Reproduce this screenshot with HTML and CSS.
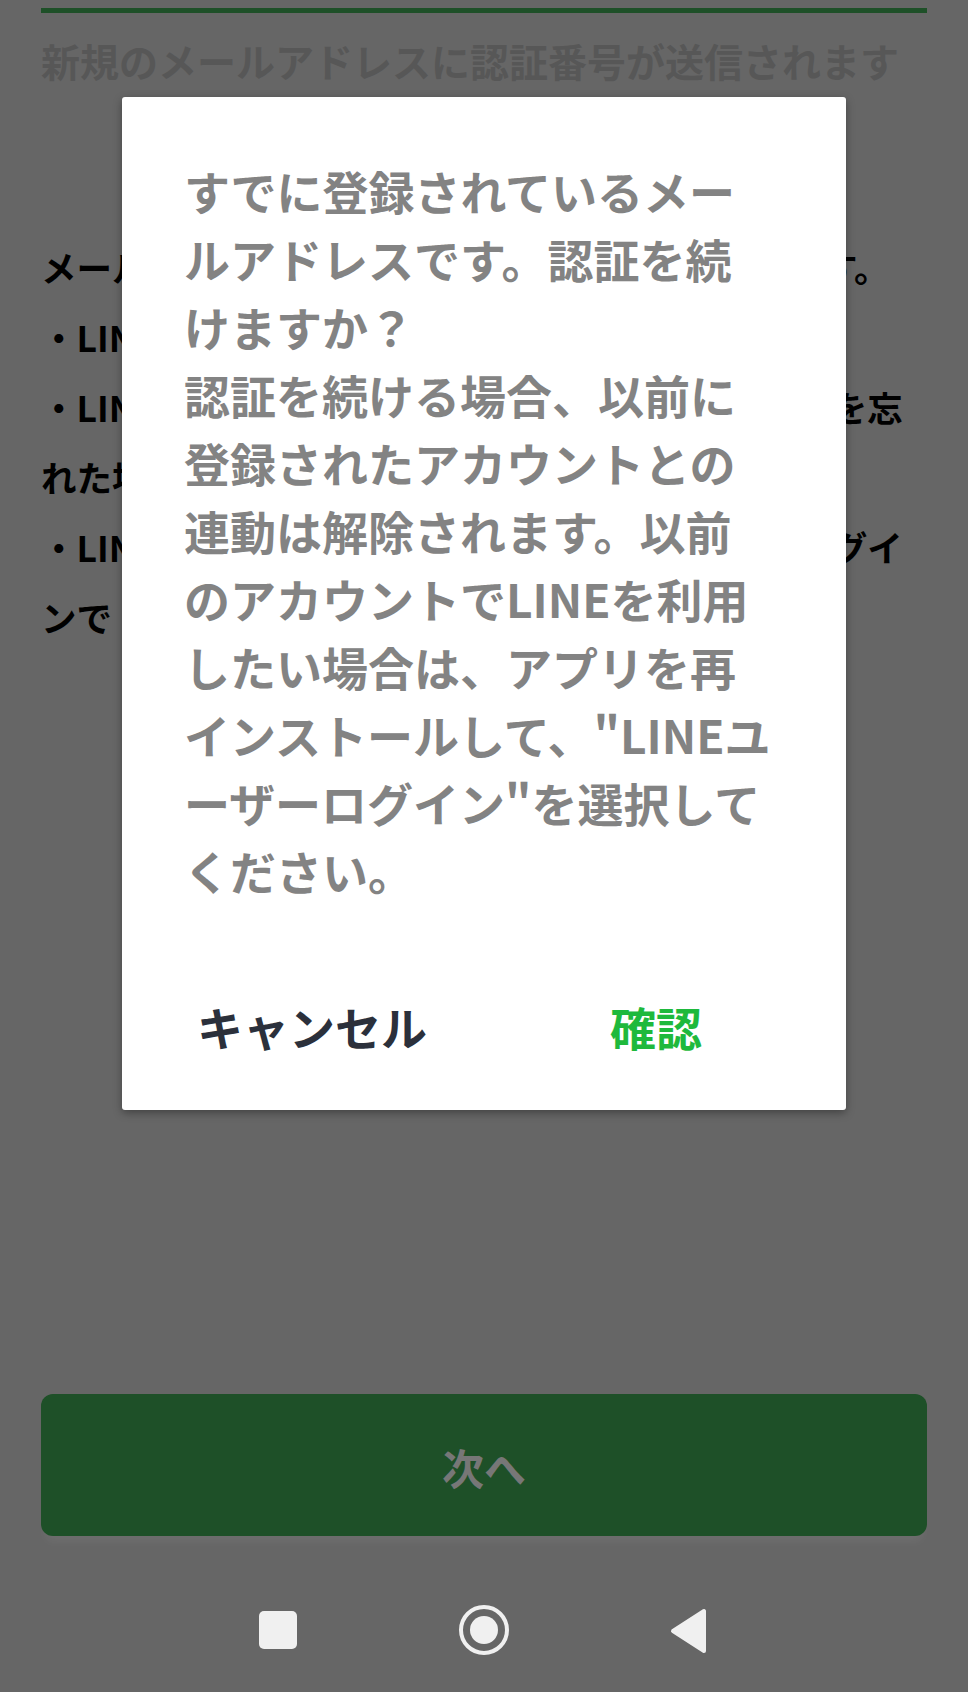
FILE: index.html
```html
<!DOCTYPE html>
<html lang="ja">
<head>
<meta charset="utf-8">
<title>メールアドレス登録</title>
<link rel="stylesheet" href="styles.css">
</head>
<body>
<div class="screen">
  <main class="content">
    <div class="progress"></div>
    <p class="hint">新規のメールアドレスに認証番号が送信されます</p>
    <div class="info">
      <p>メールアドレスを登録すると以下の３つができます。</p>
      <p>・LINEアカウントの引き継ぎ</p>
      <p>・LINEアカウントのパスワードやメールアドレスを忘れた場合の再設定</p>
      <p>・LINEアカウントでパソコンやタブレットからログインでトークができます</p>
    </div>
  </main>

  <footer class="footer">
    <button class="next" type="button">次へ</button>
    <nav class="navbar">
      <span class="nav-icon">
        <svg width="52" height="52" viewBox="0 0 52 52"><rect x="7" y="7" width="38" height="38" rx="5" fill="#f0f0f0"/></svg>
      </span>
      <span class="nav-icon">
        <svg width="52" height="52" viewBox="0 0 52 52"><circle cx="26" cy="26" r="23" fill="none" stroke="#f0f0f0" stroke-width="4"/><circle cx="26" cy="26" r="14" fill="#f0f0f0"/></svg>
      </span>
      <span class="nav-icon">
        <svg width="52" height="52" viewBox="0 0 52 52"><path d="M9 27 L40 7 L40 47 Z" fill="#f0f0f0" stroke="#f0f0f0" stroke-width="4" stroke-linejoin="round"/></svg>
      </span>
    </nav>
  </footer>

  <div class="dialog" role="dialog">
    <p class="message">すでに登録されているメー<br>ルアドレスです。認証を続<br>けますか？<br>認証を続ける場合、以前に<br>登録されたアカウントとの<br>連動は解除されます。以前<br>のアカウントでLINEを利用<br>したい場合は、アプリを再<br>インストールして、&quot;LINEユ<br>ーザーログイン&quot;を選択して<br>ください。</p>
    <div class="actions">
      <button class="action cancel" type="button">キャンセル</button>
      <button class="action confirm" type="button">確認</button>
    </div>
  </div>
</div>
</body>
</html>
```

FILE: styles.css
```css
html, body {
  margin: 0;
  padding: 0;
}

body {
  background: #666666;
  font-family: "Noto Sans CJK JP", "Noto Sans", sans-serif;
}

.screen {
  position: relative;
  width: 968px;
  height: 1692px;
  display: flex;
  flex-direction: column;
  overflow: hidden;
}

.content {
  padding: 8px 41px 0;
}

.progress {
  height: 5px;
  background: #1e5028;
}

.hint {
  margin: 17px 0 0;
  font-size: 39px;
  line-height: 60px;
  font-weight: 700;
  color: #575757;
  white-space: nowrap;
}

.info {
  margin-top: 142px;
  font-size: 35.5px;
  line-height: 70px;
  font-weight: 700;
  color: #000;
  line-break: loose;
}

.info p {
  margin: 0;
}

.footer {
  margin-top: auto;
  padding: 0 41px;
}

.next {
  display: block;
  width: 100%;
  height: 142px;
  padding: 4px 0 0;
  border: 0;
  border-radius: 12px;
  background: #1e5028;
  color: #777777;
  font-family: "Noto Sans CJK JP", "Noto Sans", sans-serif;
  font-size: 42px;
  font-weight: 700;
  line-height: 1;
  box-shadow: 0 10px 8px -4px rgba(255, 255, 255, 0.05);
}

.navbar {
  height: 124px;
  margin-top: 32px;
  display: flex;
  justify-content: center;
  align-items: center;
  gap: 154px;
}

.nav-icon {
  display: flex;
  width: 52px;
  height: 52px;
}

.dialog {
  position: absolute;
  top: 97px;
  left: 122px;
  width: 724px;
  box-sizing: border-box;
  padding: 59px 0 34px;
  background: #ffffff;
  border-radius: 3px;
  box-shadow: 0 3px 8px rgba(0, 0, 0, 0.35);
}

.message {
  margin: 0 0 0 62px;
  font-size: 46px;
  line-height: 68px;
  font-weight: 700;
  color: #838383;
  white-space: nowrap;
}

.actions {
  display: flex;
  margin-top: 72px;
  padding: 0 18px;
}

.action {
  flex: 1;
  height: 100px;
  padding: 0;
  border: 0;
  background: none;
  font-family: "Noto Sans CJK JP", "Noto Sans", sans-serif;
  font-size: 46px;
  font-weight: 700;
  line-height: 100px;
}

.cancel {
  color: #2b303b;
}

.confirm {
  color: #1eb93c;
}
```
